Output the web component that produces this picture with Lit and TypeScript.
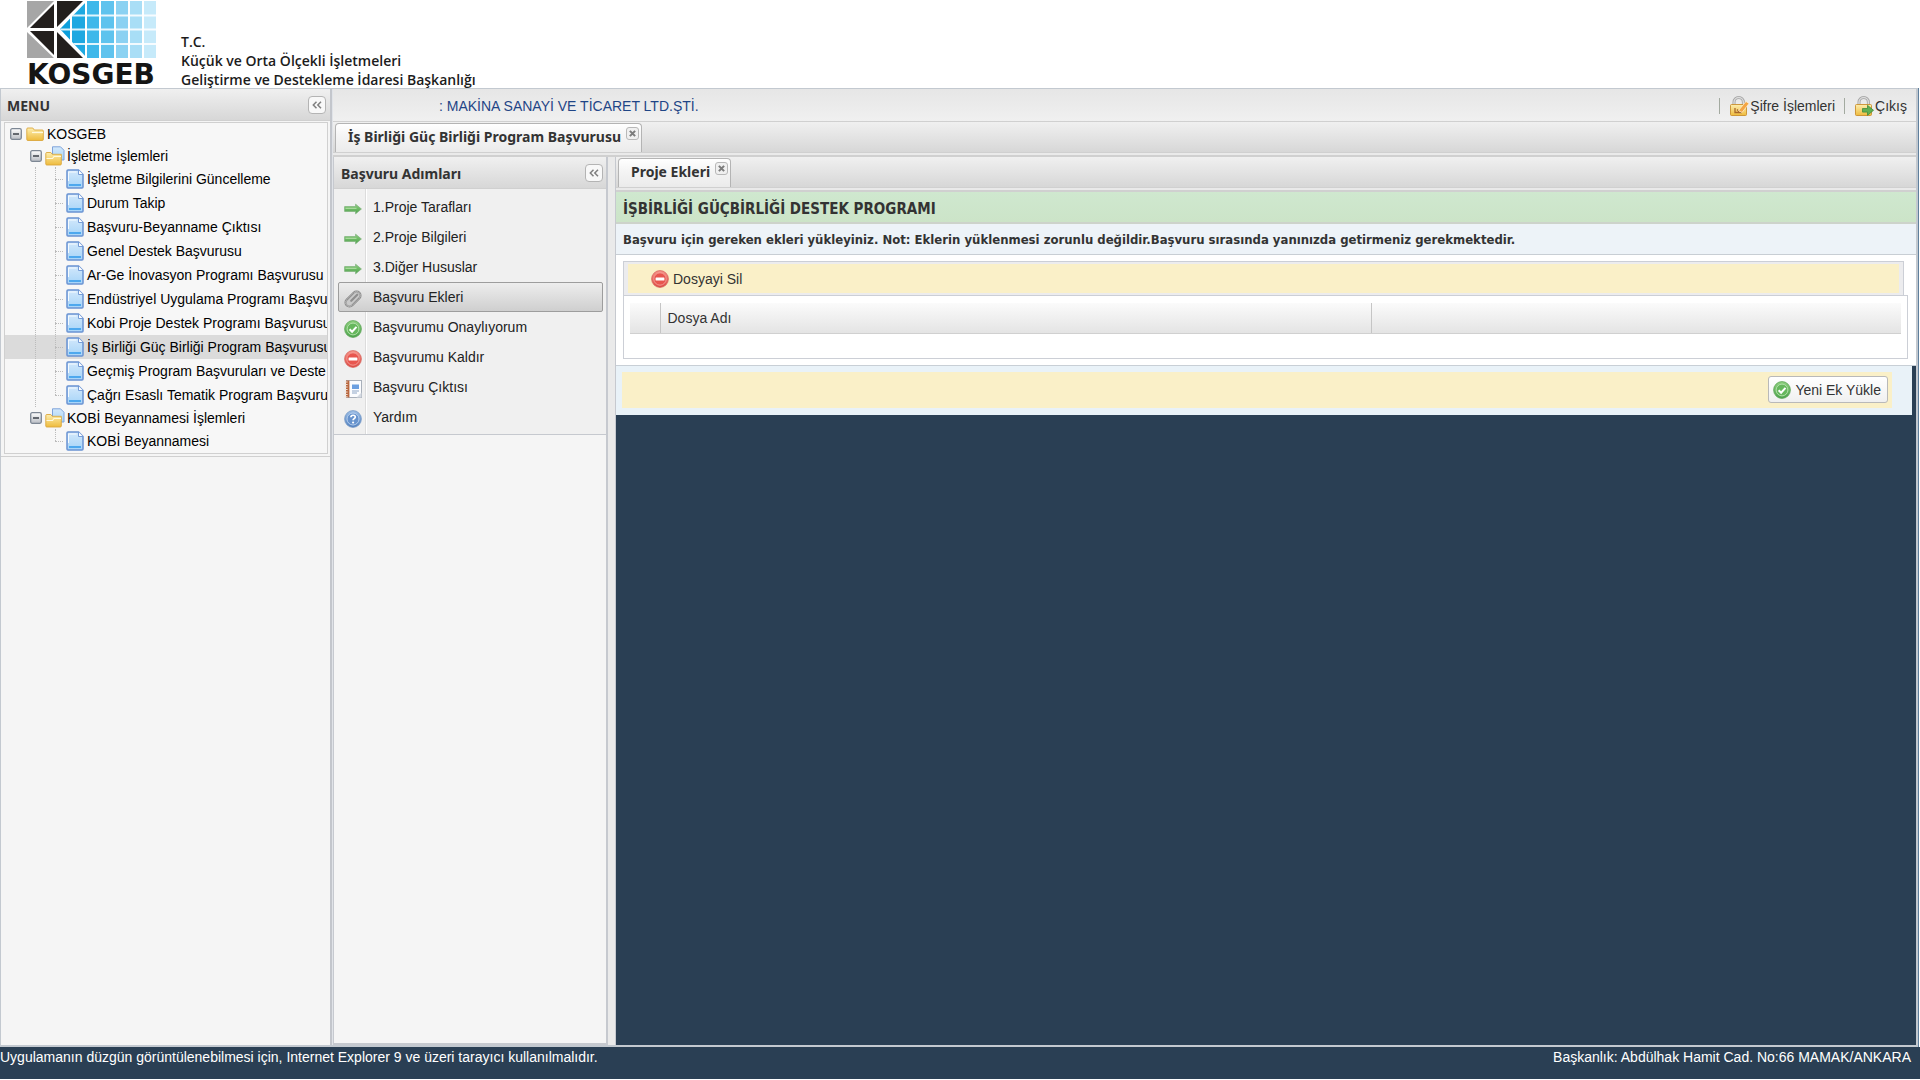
import { LitElement, html, css, svg, nothing } from "lit";
import { customElement } from "lit/decorators.js";
import { classMap } from "lit/directives/class-map.js";

type IconName = "arrow" | "clip" | "ok" | "remove" | "report" | "help";

const gradients = svg`
  <defs>
    <linearGradient id="g-green" x1="0" y1="0" x2="0" y2="1"><stop offset="0" stop-color="#8fd07f"/><stop offset="1" stop-color="#4ba24a"/></linearGradient>
    <linearGradient id="g-red" x1="0" y1="0" x2="0" y2="1"><stop offset="0" stop-color="#f7958a"/><stop offset="1" stop-color="#dc4640"/></linearGradient>
    <linearGradient id="g-blue" x1="0" y1="0" x2="0" y2="1"><stop offset="0" stop-color="#9dbfe6"/><stop offset="1" stop-color="#4f7fbe"/></linearGradient>
    <linearGradient id="g-gold" x1="0" y1="0" x2="0" y2="1"><stop offset="0" stop-color="#fdeeb0"/><stop offset="1" stop-color="#eebb3c"/></linearGradient>
    <linearGradient id="g-page" x1="0" y1="0" x2="0" y2="1"><stop offset="0" stop-color="#d3e8fb"/><stop offset="1" stop-color="#a6d4f8"/></linearGradient>
    <linearGradient id="g-knob" x1="0" y1="0" x2="0" y2="1"><stop offset="0" stop-color="#ffffff"/><stop offset="1" stop-color="#b9bdc4"/></linearGradient>
  </defs>`;

const okIcon = html`<svg class="icon" viewBox="0 0 18 18" aria-hidden="true">${gradients}
  <circle cx="9" cy="9" r="8.4" fill="url(#g-green)" stroke="#5fa65a" stroke-width=".8"/>
  <circle cx="9" cy="9" r="5.9" fill="#66b75d" stroke="#b9e3b0" stroke-width=".9"/>
  <path d="M5.6 9.2l2.5 2.5 4.4-4.8" fill="none" stroke="#fff" stroke-width="2"/></svg>`;

const removeIcon = html`<svg class="icon" viewBox="0 0 18 18" aria-hidden="true">${gradients}
  <circle cx="9" cy="9" r="8.4" fill="url(#g-red)" stroke="#d76a62" stroke-width=".8"/>
  <circle cx="9" cy="9" r="6.2" fill="#e8564f" stroke="#f6aaa2" stroke-width=".8"/>
  <rect x="4.6" y="7.4" width="8.8" height="3.2" rx=".5" fill="#fff"/></svg>`;

const icons: Record<IconName, unknown> = {
  arrow: html`<svg class="icon" viewBox="0 0 18 18" aria-hidden="true">${gradients}
    <path d="M.6 6.600h11V4.200L17.400 9l-5.800 4.800v-2.400H.6z" fill="url(#g-green)" stroke="#7fb37c" stroke-width=".8"/>
    <path d="M1.500 8.300h11" stroke="#b4e0a8" stroke-width="1"/></svg>`,
  clip: html`<svg class="icon" viewBox="0 0 18 18" aria-hidden="true">
    <g transform="rotate(-45 9 9)" fill="none">
    <rect x="0" y="5" width="18" height="8" rx="4" fill="#c9c9c9" stroke="#808080" stroke-width="2"/>
    <rect x="0" y="5" width="18" height="8" rx="4" stroke="#c2c2c2" stroke-width=".8"/>
    <path d="M15 9H6.500" stroke="#8e8e8e" stroke-width="2.200" stroke-linecap="round"/></g></svg>`,
  ok: okIcon,
  remove: removeIcon,
  report: html`<svg class="icon" viewBox="0 0 18 18" aria-hidden="true">
    <rect x="2.5" y="0.5" width="15" height="17" fill="#fbfcfe" stroke="#a9b0ba"/>
    <rect x="2" y="0.5" width="3.4" height="17" fill="#b9673f"/>
    <path d="M.6 2h3M.6 4.5h3M.6 7h3M.6 9.500h3M.6 12h3M.6 14.500h3M.6 16.800h3" stroke="#efe3da" stroke-width="1"/>
    <rect x="8" y="4.500" width="7" height="4.500" fill="#6b9fe0"/>
    <path d="M8 11h7M8 13h5" stroke="#8ea6c6" stroke-width="1"/>
    <path d="M17.500 12.500v5h-5z" fill="#d5dae2"/></svg>`,
  help: html`<svg class="icon" viewBox="0 0 18 18" aria-hidden="true">${gradients}
    <circle cx="9" cy="9" r="8.4" fill="url(#g-blue)" stroke="#7b9cc6" stroke-width=".8"/>
    <circle cx="9" cy="9" r="6" fill="#6793cd" stroke="#bcd3ef" stroke-width=".9"/>
    <path d="M6.900 7.300c0-2.700 4.400-2.700 4.400-.3 0 1.700-2.200 1.600-2.200 3.200" fill="none" stroke="#fff" stroke-width="1.700"/>
    <circle cx="9.100" cy="12.500" r="1.100" fill="#fff"/></svg>`,
};

const pageIcon = html`<svg class="page" viewBox="0 0 18 20" aria-hidden="true">${gradients}
  <path d="M2 1h10.500L17 5.500V18a1 1 0 0 1-1 1H2a1 1 0 0 1-1-1V2a1 1 0 0 1 1-1z" fill="url(#g-page)" stroke="#6a93d2" stroke-width="1.500"/>
  <path d="M12.500 1v4.500H17" fill="#fff" stroke="#6a93d2" stroke-width=".9"/>
  <path d="M2.500 12V3h8" fill="none" stroke="#f6fbff" stroke-width="1"/>
  <rect x="3" y="15" width="12" height="2" fill="#4da8ee"/></svg>`;

const folderIcon = html`<svg class="icon" viewBox="0 0 18 18" aria-hidden="true">${gradients}
  <path d="M.8 4a1 1 0 0 1 1-1h5l1.500 2h8a1 1 0 0 1 1 1v8.500a1 1 0 0 1-1 1H1.800a1 1 0 0 1-1-1z" fill="url(#g-gold)" stroke="#dba73c" stroke-width=".9"/>
  <path d="M6 7.500h11" stroke="#fff9dd" stroke-width="1.200"/></svg>`;

const openIcon = html`<svg class="open" viewBox="0 0 20 20" aria-hidden="true">${gradients}
  <path d="M7.500.8h8L19 4.300V14H7.500z" fill="url(#g-page)" stroke="#7fa3da"/>
  <path d="M.8 7.500a1 1 0 0 1 1-1h4l1.500 1.800h9V18a1 1 0 0 1-1 1H1.800a1 1 0 0 1-1-1z" fill="url(#g-gold)" stroke="#dba73c" stroke-width=".9"/>
  <path d="M1.500 12.500h6l1.500-2h7" fill="none" stroke="#fff9dd" stroke-width="1.200"/></svg>`;

const minusIcon = html`<svg class="knob" viewBox="0 0 12 12" aria-hidden="true">${gradients}
  <rect x=".7" y=".7" width="10.600" height="10.600" rx="1.500" fill="url(#g-knob)" stroke="#7d8794" stroke-width="1.300"/>
  <path d="M3 6h6" stroke="#30363e" stroke-width="1.400"/></svg>`;

const lockIcon = (badge: unknown) => html`<svg class="lock" viewBox="0 0 20 20" aria-hidden="true">${gradients}
  <path d="M5 9V6.200a4.700 4.700 0 0 1 9.400 0V9" fill="none" stroke="#a4a4a4" stroke-width="3"/>
  <path d="M5 9V6.200a4.700 4.700 0 0 1 9.400 0V9" fill="none" stroke="#dcdcdc" stroke-width="1.400"/>
  <rect x="1.500" y="8.500" width="16" height="11" rx="1" fill="url(#g-gold)" stroke="#c98f2c" stroke-width=".9"/>
  ${badge}</svg>`;

const passwordBadge = svg`<path d="M6 12v4.500h7M8 13.500l2 2" fill="none" stroke="#a8672a" stroke-width="1.300"/><path d="M9.500 14.500l7.500-9 3 2-7 9z" fill="#f4a545" stroke="#fff3d8" stroke-width=".7"/>`;
const exitBadge = svg`<path d="M8.500 12.500h5V9.300l6 5-6 5v-3.200h-5z" fill="#5fb052" stroke="#3f8a3b" stroke-width=".8"/>`;

const collapseGlyph = html`<svg class="chevrons" viewBox="0 0 10 8" aria-hidden="true">
  <path d="M4.500.7L1.300 4l3.200 3.300M9 .7L5.800 4 9 7.300" fill="none" stroke="#808080" stroke-width="1.500"/></svg>`;

const closeGlyph = html`<svg class="cross" viewBox="0 0 8 8" aria-hidden="true">
  <path d="M1 1l6 6M7 1L1 7" stroke="#7c7c7c" stroke-width="2.400"/></svg>`;

/* Colours, fonts and control styles used by every part of the desk. */
const shared = css`
  * { box-sizing: border-box; }
  :host { font: 14px/18px "Liberation Sans", Arial, sans-serif; color: #222; }
  h1, h2, p, ul { margin: 0; padding: 0; }
  ul { list-style: none; }
  a { color: inherit; text-decoration: none; }
  button { font: inherit; color: inherit; margin: 0; padding: 0; cursor: pointer; }
  svg { display: block; flex: none; }
  .icon { width: 18px; height: 18px; }
  .title { font: bold 14px/18px "Noto Sans", Tahoma, sans-serif; color: #333; }
  .bar { display: flex; align-items: center; justify-content: space-between; height: 32px; background: linear-gradient(#f0f0f0, #d7d7d7); border-bottom: 1px solid #d0d0d0; }
  .bar .title { padding-top: 2px; }
  .tool { display: flex; align-items: center; justify-content: center; width: 18px; height: 18px; background: #f8f8f8; border: 1px solid #b4b4b4; border-radius: 4px; }
  .chevrons { width: 10px; height: 8px; }
`;

interface Leaf { label: string; selected?: boolean; }
interface Branch { label: string; last?: boolean; leaves: Leaf[]; }

const branches: Branch[] = [
  {
    label: "İşletme İşlemleri",
    leaves: [
      { label: "İşletme Bilgilerini Güncelleme" },
      { label: "Durum Takip" },
      { label: "Başvuru-Beyanname Çıktısı" },
      { label: "Genel Destek Başvurusu" },
      { label: "Ar-Ge İnovasyon Programı Başvurusu" },
      { label: "Endüstriyel Uygulama Programı Başvu" },
      { label: "Kobi Proje Destek Programı Başvurusu" },
      { label: "İş Birliği Güç Birliği Program Başvurusu", selected: true },
      { label: "Geçmiş Program Başvuruları ve Deste" },
      { label: "Çağrı Esaslı Tematik Program Başvuru" },
    ],
  },
  { label: "KOBİ Beyannamesi İşlemleri", last: true, leaves: [{ label: "KOBİ Beyannamesi" }] },
];

@customElement("menu-tree")
export class MenuTree extends LitElement {
  static styles = [shared, css`
    :host { display: block; padding: 1px 2px 2px 3px; border-bottom: 1px solid #d0d0d0; }
    .tree { border: 1px solid #d0d0d0; background: #f7f7f7; overflow: hidden; color: #000; }
    .row { display: flex; align-items: center; height: 22px; white-space: nowrap; }
    .root { padding-left: 5px; gap: 3px; }
    .branch { padding-left: 25px; gap: 2px; }
    .knob { width: 12px; height: 12px; margin-right: 1px; }
    .open { width: 20px; height: 20px; }
    .page { width: 18px; height: 20px; }
    .leaves { position: relative; }
    .leaf { height: 24px; padding-left: 50px; gap: 3px; }
    .leaf::before { content: ""; flex: none; width: 8px; border-top: 1px dotted #bbb; }
    .leaves::before { content: ""; position: absolute; left: 50px; top: 0; bottom: 12px; border-left: 1px dotted #bbb; }
    .trunk::after { content: ""; position: absolute; left: 30px; top: 0; bottom: 0; border-left: 1px dotted #bbb; }
    .selected { background: #dbdbdb; }
  `];

  render() {
    return html`<div class="tree">
      <div class="row root">${minusIcon}${folderIcon}<span>KOSGEB</span></div>
      ${branches.map((b) => html`
        <div class="row branch">${minusIcon}${openIcon}<span>${b.label}</span></div>
        <ul class=${classMap({ leaves: true, trunk: !b.last })}>
          ${b.leaves.map((l) => html`<li><a href="#" class=${classMap({ row: true, leaf: true, selected: !!l.selected })}>${pageIcon}<span>${l.label}</span></a></li>`)}
        </ul>`)}
    </div>`;
  }
}

const steps: { icon: IconName; label: string; current?: boolean }[] = [
  { icon: "arrow", label: "1.Proje Tarafları" },
  { icon: "arrow", label: "2.Proje Bilgileri" },
  { icon: "arrow", label: "3.Diğer Hususlar" },
  { icon: "clip", label: "Başvuru Ekleri", current: true },
  { icon: "ok", label: "Başvurumu Onaylıyorum" },
  { icon: "remove", label: "Başvurumu Kaldır" },
  { icon: "report", label: "Başvuru Çıktısı" },
  { icon: "help", label: "Yardım" },
];

@customElement("step-menu")
export class StepMenu extends LitElement {
  static styles = [shared, css`
    :host { display: flex; flex-direction: column; background: #f5f5f5; border: 1px solid #c6c9cf; border-width: 0 2px 2px 1px; }
    .bar { padding: 0 3px 0 7px; }
    .steps { padding: 3px 3px 2px 4px; background: linear-gradient(90deg, transparent 31px, #dcdcdc 31px, #dcdcdc 32px, #fff 32px, #fff 33px, transparent 33px) #f0f0f0; border-bottom: 1px solid #c6c9cf; }
    .step { display: flex; align-items: center; gap: 11px; width: 100%; height: 30px; padding: 0 5px; background: none; border: 1px solid transparent; border-radius: 2px; text-align: left; }
    .step .icon { margin-top: 4px; }
    .current { background: linear-gradient(#ededed, #cfcfcf); border-color: #9d9d9d; }
  `];

  render() {
    return html`
      <div class="bar"><h2 class="title">Başvuru Adımları</h2><button class="tool" aria-label="Daralt">${collapseGlyph}</button></div>
      <ul class="steps">
        ${steps.map((s) => html`<li><button class=${classMap({ step: true, current: !!s.current })} aria-current=${s.current ? "step" : nothing}>${icons[s.icon]}<span>${s.label}</span></button></li>`)}
      </ul>`;
  }
}

@customElement("tab-strip")
export class TabStrip extends LitElement {
  static properties = { label: { type: String } };
  declare label: string;

  static styles = [shared, css`
    :host { display: block; border-bottom: 2px solid #d0d0d0; background: #eaeaea; padding-bottom: 2px; }
    .strip { display: flex; align-items: flex-end; height: 31px; padding-left: 2px; background: linear-gradient(#f0f0f0, #d7d7d7); border-bottom: 1px solid #d0d0d0; }
    .tab { display: flex; gap: 5px; height: 29px; padding: 3px 2px 0 12px; background: linear-gradient(#fff, #f5f5f5 40%, #ebebeb); border: 1px solid #b4b4b4; border-bottom: 0; border-radius: 4px 4px 0 0; }
    .name { background: none; border: 0; height: 20px; }
    .close { display: flex; align-items: center; justify-content: center; width: 13px; height: 13px; background: #f0f0f0; border: 1px solid #b8b8b8; border-radius: 3px; }
    .cross { width: 7px; height: 7px; }
  `];

  render() {
    return html`<div class="strip"><div class="tab"><button class="title name">${this.label}</button><button class="close" aria-label="Kapat">${closeGlyph}</button></div></div>`;
  }
}

@customElement("attachment-panel")
export class AttachmentPanel extends LitElement {
  static styles = [shared, css`
    :host { display: flex; flex-direction: column; background: #2a3f54; }
    .program { display: flex; align-items: center; height: 32px; padding: 4px 7px 0; background: linear-gradient(#cfe8cf, #cce4c8); border-bottom: 2px solid #cdd3cb; }
    .program .title { font: bold 15px/18px "DejaVu Sans Condensed", Tahoma, sans-serif; }
    .note { display: flex; align-items: center; height: 31px; padding: 2px 7px 0; background: #edf3f8; border-bottom: 1px solid #c8ced4; }
    .note .title { font: bold 13px/18px "DejaVu Sans Condensed", Tahoma, sans-serif; }
    .files { padding: 6px 8px 6px 7px; background: #fff; border-bottom: 1px solid #c8cfd6; }
    .actions { display: flex; align-items: center; height: 34px; margin-right: 4px; padding: 2px 4px; background: #ececee; border: 1px solid #cccfd6; border-bottom: 0; }
    .delete { display: flex; align-items: center; gap: 4px; flex: 1; height: 29px; padding-left: 23px; background: #faf0c8; border: 0; color: #333; text-align: left; }
    .box { border: 1px solid #cccfd6; padding: 7px 6px 24px; }
    .table { width: 100%; border-collapse: collapse; table-layout: fixed; }
    .table th { height: 30px; padding: 0 7px; font-weight: normal; text-align: left; color: #333; border-bottom: 1px solid #d0d0d0; }
    .table th + th { border-left: 1px solid #c5c5c5; }
    .table tr { background: linear-gradient(#fbfbfb, #e4e4e4); }
    .pick { width: 30px; }
    .name { width: 56%; }
    .footer { display: flex; height: 49px; margin-right: 4px; padding: 6px 20px 7px 6px; background: #e9f2f8; }
    .well { display: flex; flex: 1; align-items: center; justify-content: flex-end; padding: 0 4px; background: #faf0c8; }
    .upload { display: flex; align-items: center; gap: 4px; height: 27px; padding: 0 6px 0 4px; background: linear-gradient(#fff, #f0f0f0); border: 1px solid #b9b9b9; border-radius: 3px; color: #333; }
  `];

  render() {
    return html`
      <div class="program"><h2 class="title">İŞBİRLİĞİ GÜÇBİRLİĞİ DESTEK PROGRAMI</h2></div>
      <div class="note"><p class="title">Başvuru için gereken ekleri yükleyiniz. Not: Eklerin yüklenmesi zorunlu değildir.Başvuru sırasında yanınızda getirmeniz gerekmektedir.</p></div>
      <div class="files">
        <div class="actions"><button class="delete">${removeIcon}<span>Dosyayi Sil</span></button></div>
        <div class="box">
          <table class="table">
            <thead><tr><th class="pick"></th><th class="name">Dosya Adı</th><th></th></tr></thead>
          </table>
        </div>
      </div>
      <div class="footer"><div class="well"><button class="upload">${okIcon}<span>Yeni Ek Yükle</span></button></div></div>`;
  }
}

const shades = ["#0d9fdc", "#1ea9e1", "#3fb8ea", "#5fc3ee", "#8bd2f2", "#a9def6", "#c6eafa"];

@customElement("kosgeb-logo")
export class KosgebLogo extends LitElement {
  static styles = css`
    :host { display: block; width: 130px; }
    .mark { display: block; width: 130px; height: 58px; }
    .word { padding-top: 3px; font: bold 28px/28px "DejaVu Sans", Verdana, sans-serif; color: #151515; white-space: nowrap; }
  `;

  render() {
    const edges = [30, 44, 59, 73, 88, 102, 116, 130];
    return html`<svg class="mark" viewBox="0 0 130 58" aria-hidden="true">
      <defs><clipPath id="fan"><path d="M33 29L60 1h70v57H60z"/></clipPath></defs>
      <path d="M0 1h27L0 28zM0 58V32l27 26z" fill="#a6a6a6"/>
      <path d="M3 28L27 4v24zM3 31h24v24zM30 1h26L30 27zM30 32l26 26H30z" fill="#231f1d"/>
      <g clip-path="url(#fan)">
        ${shades.map((c, i) => svg`<rect x=${edges[i] + 1} y="1" width=${edges[i + 1] - edges[i] - 2} height="57" fill=${c}/>`)}
        <path d="M30 15.500h100M30 29.500h100M30 44h100" stroke="#fff" stroke-width="1.800" opacity=".85"/>
      </g></svg>
      <div class="word">KOSGEB</div>`;
  }
}

@customElement("app-root")
export class AppRoot extends LitElement {
  static styles = [shared, css`
    :host { display: flex; flex-direction: column; min-height: 100vh; background: #fff; }
    .head { display: flex; height: 88px; padding-left: 27px; gap: 24px; }
    .agency { padding-top: 32px; font: 600 14px/19px "Open Sans", "Noto Sans", sans-serif; color: #1c1c1c; white-space: nowrap; }
    .desk { display: flex; flex: 1; border: solid #c3c9d0; border-width: 1px 2px 2px 1px; box-shadow: 1px 0 #5f7f9c; margin-right: 2px; background: #eaeaea; }
    .west { display: flex; flex-direction: column; flex: none; width: 331px; background: #f5f5f5; border-right: 2px solid #c3c6cc; }
    .west .bar { padding: 0 4px 0 6px; }
    .center { display: flex; flex: 1; flex-direction: column; min-width: 0; border-left: 1px solid #e0e3e8; }
    .status { display: flex; align-items: center; justify-content: space-between; height: 33px; padding: 2px 9px 0 106px; background: linear-gradient(#e6e6e6, #f0f0f0); border-bottom: 1px solid #d0d0d0; }
    .company { color: #1f4586; }
    .links { display: flex; align-items: center; gap: 9px; }
    .link { display: flex; align-items: center; gap: 1px; color: #333; }
    .sep { width: 1px; height: 16px; background: #a3aaa0; }
    .lock { width: 20px; height: 20px; }
    .work { display: flex; flex: 1; }
    .side { flex: none; width: 275px; }
    .main { display: flex; flex-direction: column; flex: 1; min-width: 0; margin-left: 7px; border-left: 1px solid #c6c9cf; }
    .panel { flex: 1; }
    .foot { display: flex; justify-content: space-between; height: 33px; padding: 1px 9px 0 0; background: #2a3f54; color: #fff; border-bottom: 1px solid #fff; }
  `];

  render() {
    return html`
      <header class="head">
        <kosgeb-logo></kosgeb-logo>
        <p class="agency">T.C.<br>Küçük ve Orta Ölçekli İşletmeleri<br>Geliştirme ve Destekleme İdaresi Başkanlığı</p>
      </header>
      <div class="desk">
        <nav class="west" aria-label="Menu">
          <div class="bar"><h1 class="title">MENU</h1><button class="tool" aria-label="Daralt">${collapseGlyph}</button></div>
          <menu-tree></menu-tree>
        </nav>
        <main class="center">
          <div class="status">
            <span class="company">: MAKİNA SANAYİ VE TİCARET LTD.ŞTİ.</span>
            <div class="links">
              <span class="sep"></span><a class="link" href="#">${lockIcon(passwordBadge)}Şifre İşlemleri</a>
              <span class="sep"></span><a class="link" href="#">${lockIcon(exitBadge)}Çıkış</a>
            </div>
          </div>
          <tab-strip label="İş Birliği Güç Birliği Program Başvurusu"></tab-strip>
          <div class="work">
            <step-menu class="side"></step-menu>
            <section class="main">
              <tab-strip label="Proje Ekleri"></tab-strip>
              <attachment-panel class="panel"></attachment-panel>
            </section>
          </div>
        </main>
      </div>
      <footer class="foot">
        <span>Uygulamanın düzgün görüntülenebilmesi için, Internet Explorer 9 ve üzeri tarayıcı kullanılmalıdır.</span>
        <span>Başkanlık: Abdülhak Hamit Cad. No:66 MAMAK/ANKARA</span>
      </footer>`;
  }
}
